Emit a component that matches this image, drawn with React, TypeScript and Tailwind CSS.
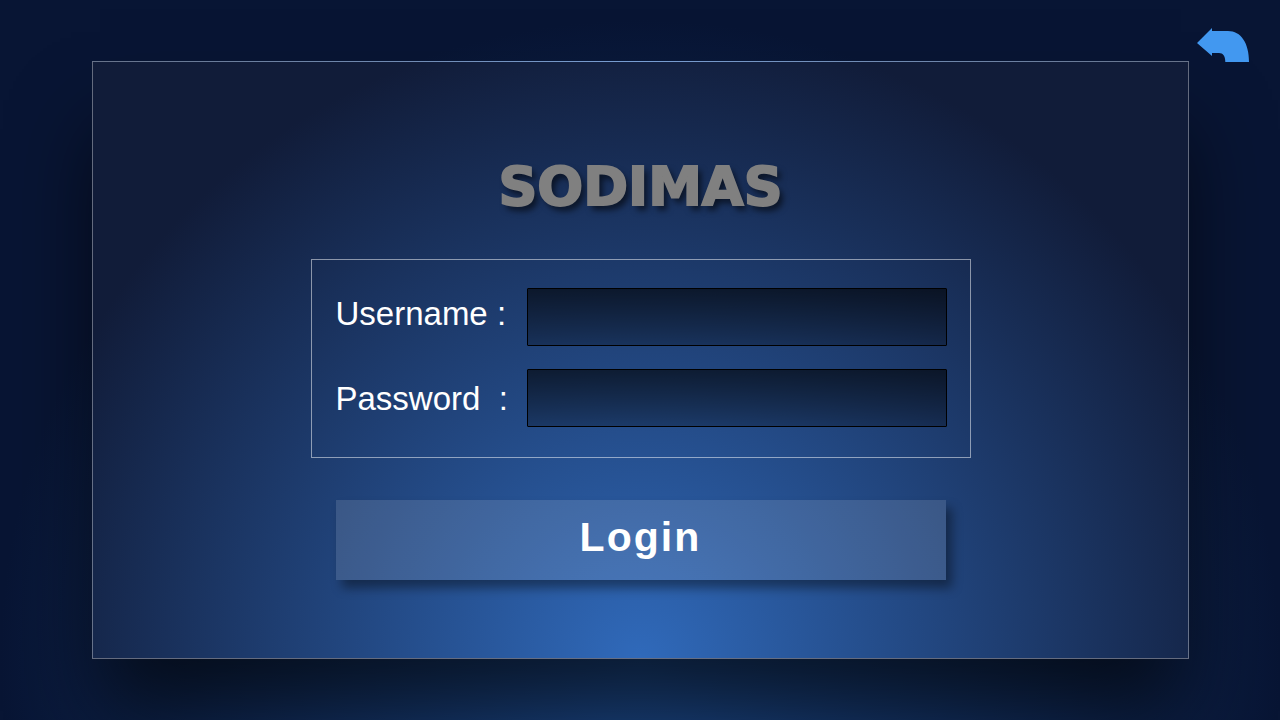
import React from "react";

function BackIcon() {
  return (
    <svg width="52" height="34" viewBox="0 0 52 34" fill="#4298f0" aria-hidden="true">
      <path d="M0 15 15 0V3H31C44 3 52 15 52 34H28.300C28.300 28 26 25 22 25H15V28Z" />
    </svg>
  );
}

const fields = [
  { id: "username", label: "Username :", type: "text" },
  { id: "password", label: "Password  :", type: "password" },
];

export default function App() {
  return (
    <div className="flex min-h-screen flex-col bg-[radial-gradient(ellipse_640px_640px_at_50%_660px,#1c498a_0%,#081534_100%)] font-['Liberation_Sans',Arial,sans-serif]">
      <header className="flex h-[61px] shrink-0 items-start justify-end pt-7 pr-[31px]">
        <button type="button" aria-label="Back" className="relative z-10">
          <BackIcon />
        </button>
      </header>
      <main className="mr-[91px] mb-[61px] ml-[92px] flex flex-1 flex-col items-center border border-white/35 bg-[radial-gradient(ellipse_640px_640px_at_50%_600px,#306abb_0%,#111c39_100%)] pt-[95px] pb-[78px] shadow-[0_60px_80px_-8px_rgba(0,0,0,0.65)]">
        <h1 className="font-['DejaVu_Sans',sans-serif] text-[54px] leading-[60px] font-bold text-[#808080] [-webkit-text-stroke:2px_#808080] [text-shadow:4px_5px_6px_rgba(0,0,0,0.6)]">
          SODIMAS
        </h1>
        <form className="flex flex-col items-center gap-[42px] pt-[42px]" onSubmit={(e) => e.preventDefault()}>
          <div className="flex w-[660px] items-start justify-between border border-white/50 pt-7 pr-[23px] pb-[30px] pl-6">
            <div className="flex flex-col gap-[45px] pt-1.5">
              {fields.map((field) => (
                <label key={field.id} htmlFor={field.id} className="text-[33px] leading-10 whitespace-pre text-white">
                  {field.label}
                </label>
              ))}
            </div>
            <div className="flex flex-col gap-[23px]">
              {fields.map((field) => (
                <input
                  key={field.id}
                  id={field.id}
                  type={field.type}
                  className="h-[58px] w-[420px] rounded-[1px] border border-black bg-linear-to-b from-black/60 to-black/25 px-4 text-[28px] text-white outline-none"
                />
              ))}
            </div>
          </div>
          <button
            type="submit"
            className="h-20 w-[610px] bg-[linear-gradient(rgba(255,255,255,0.12),rgba(255,255,255,0.12))] pb-1 text-[41px] font-bold tracking-wider text-white shadow-[6px_8px_10px_rgba(0,0,0,0.4)]"
          >
            Login
          </button>
        </form>
      </main>
    </div>
  );
}
